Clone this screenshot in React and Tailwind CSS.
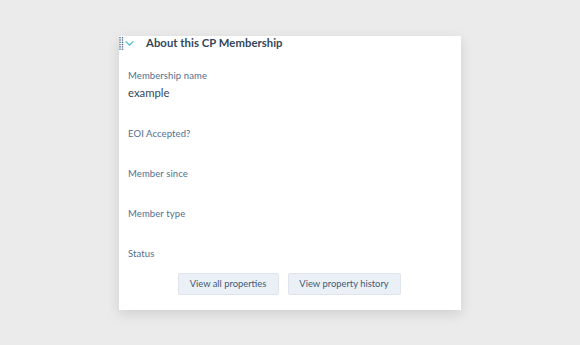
import React from 'react';

const fields = [
    { label: 'Membership name', value: 'example' },
    { label: 'EOI Accepted?' },
    { label: 'Member since' },
    { label: 'Member type' },
    { label: 'Status' },
];

const GripDots = () => (
    <svg width="5" height="14" viewBox="0 0 5 14" className="absolute left-0 top-[1px]">
        {[0, 1, 2, 3, 4, 5].map((r) =>
            [0, 1].map((c) => (
                <rect key={`${r}-${c}`} x={c * 2.5 + 0.3} y={r * 2.3} width="1.4" height="1.4" fill="#516f90" />
            ))
        )}
    </svg>
);

const App = () => {
    return (
        <div className="w-[580px] h-[345px] bg-[#ebebeb] pt-[36px] pl-[119px]" style={{ fontFamily: 'Lato, "Open Sans", sans-serif' }}>
            <div className="relative w-[342px] h-[274px] bg-white shadow-[0_4px_12px_rgba(0,0,0,0.12)]">
                <GripDots />
                <div className="flex items-center h-[15px] pl-[6px]">
                    <svg width="9" height="5" viewBox="0 0 9 5">
                        <path d="M1 0.8l3.5 3.2L8 0.8" fill="none" stroke="#5cbfd6" strokeWidth="1.3" strokeLinecap="round" />
                    </svg>
                    <span className="ml-[12px] text-[11.3px] font-bold tracking-[0.05px] text-[#33475b]">About this CP Membership</span>
                </div>
                <div className="pl-[9px] pt-[18px]">
                    {fields.map((f) => (
                        <div key={f.label} className={f.value ? 'h-[58px]' : 'h-[40px]'}>
                            <div className="text-[9.5px] leading-[14px] tracking-[0.1px] text-[#516f90]">{f.label}</div>
                            {f.value && <div className="mt-[2px] text-[11.3px] leading-[16px] text-[#33475b]">{f.value}</div>}
                        </div>
                    ))}
                </div>
                <div className="absolute left-0 right-0 top-[237px] flex justify-center gap-[9px] pr-[2px]">
                    <button className="h-[22px] w-[101px] rounded-[2px] border border-[#dfe3eb] bg-[#eaf0f6] text-[9.4px] text-[#425b76]">View all properties</button>
                    <button className="h-[22px] w-[113px] rounded-[2px] border border-[#dfe3eb] bg-[#eaf0f6] text-[9.4px] text-[#425b76]">View property history</button>
                </div>
            </div>
        </div>
    );
};

export default App;
